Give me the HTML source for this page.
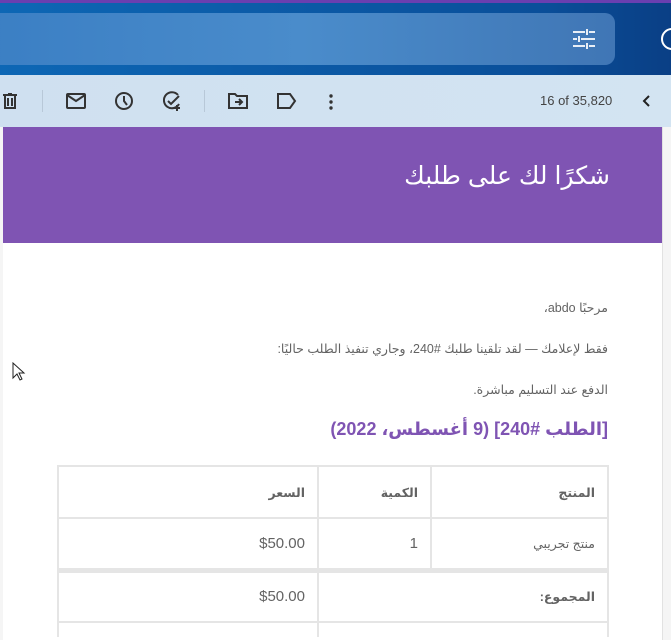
<!DOCTYPE html>
<html><head><meta charset="utf-8"><style>
*{margin:0;padding:0;box-sizing:border-box}
body{width:671px;height:640px;overflow:hidden;background:#f5f5f5;font-family:"Liberation Sans","DejaVu Sans",sans-serif;position:relative}
.top{position:absolute;left:0;top:0;width:671px;height:75px;background:linear-gradient(90deg,#0d67b5,#0a4f9a 80%,#0a3f85)}
.top:before{content:"";position:absolute;left:0;top:0;width:671px;height:3px;background:#6a3fb0}
.search{position:absolute;left:-10px;top:13px;width:625px;height:52px;border-radius:10px;background:linear-gradient(90deg,#3b7fc4,#4a8ccb 50%,#4076b5)}
.tb{position:absolute;left:0;top:75px;width:671px;height:52px;background:linear-gradient(90deg,#cfe0f0,#d3e4f2)}
.cnt{position:absolute;left:540px;top:93px;font-size:13px;color:#444}
.card{position:absolute;left:3px;top:127px;width:660px;height:513px;background:#fff;border-right:1px solid #e2e2e2;overflow:hidden}
.hdr{height:116px;background:#7f54b3;color:#fff;font-size:25px;text-align:right;padding:34px 52px 0 0;direction:rtl}
.p{position:absolute;right:54px;font-size:12.5px;color:#636363;direction:rtl}
.h2{position:absolute;right:54px;top:292px;font-size:18px;font-weight:bold;color:#7f54b3;direction:rtl}
table{position:absolute;left:54px;top:338px;width:552px;border-collapse:collapse;direction:rtl;font-size:12.5px;color:#636363}
td{border:2px solid #e5e5e5;height:52px;padding:0 12px;text-align:right}
</style></head><body>
<div class="top"><div class="search"></div>
<svg style="position:absolute;left:573px;top:29px" width="22" height="20" viewBox="0 0 22 20" fill="none" stroke="#e8eef6" stroke-width="2"><path d="M0 3h12M16 3h6M14 0v6M0 10h4M8 10h14M6 7v6M0 17h12M16 17h6M14 14v6"/></svg>
<svg style="position:absolute;left:660px;top:27px" width="11" height="24" viewBox="0 0 11 24" fill="none" stroke="#fff" stroke-width="2"><circle cx="12" cy="12" r="10"/></svg>
</div>
<div class="tb"></div>
<svg style="position:absolute;left:3px;top:93px" width="14" height="16" viewBox="0 0 14 16" fill="none" stroke="#333" stroke-width="2"><path d="M0 2h14M5 0h4M2 3v12h10V3M5 5v8M9 5v8"/></svg>
<div style="position:absolute;left:42px;top:90px;width:1px;height:22px;background:#b8c8d8"></div>
<div style="position:absolute;left:204px;top:90px;width:1px;height:22px;background:#b8c8d8"></div>
<svg style="position:absolute;left:66px;top:93px" width="20" height="16" viewBox="0 0 20 16" fill="none" stroke="#333" stroke-width="2"><rect x="1" y="1" width="18" height="14" rx="1"/><path d="M1 2l9 6 9-6"/></svg>
<svg style="position:absolute;left:114px;top:91px" width="20" height="20" viewBox="0 0 20 20" fill="none" stroke="#333" stroke-width="2"><circle cx="10" cy="10" r="8"/><path d="M10 5v5l3 4"/></svg>
<svg style="position:absolute;left:162px;top:91px" width="22" height="22" viewBox="0 0 22 22" fill="none" stroke="#333" stroke-width="2"><path d="M16 4a8 8 0 1 0 1 9"/><path d="M6 10l3 3 8-8M15 14v6M12 17h6"/></svg>
<svg style="position:absolute;left:228px;top:93px" width="20" height="16" viewBox="0 0 20 16" fill="none" stroke="#333" stroke-width="2"><path d="M1 1h6l2 2h10v12H1z"/><path d="M7 9h7M11 6l3 3-3 3"/></svg>
<svg style="position:absolute;left:277px;top:93px" width="20" height="16" viewBox="0 0 20 16" fill="none" stroke="#333" stroke-width="2"><path d="M1 1h12l5 7-5 7H1z"/></svg>
<svg style="position:absolute;left:328px;top:94px" width="6" height="16" viewBox="0 0 6 16" fill="#333"><circle cx="3" cy="2" r="1.7"/><circle cx="3" cy="8" r="1.7"/><circle cx="3" cy="14" r="1.7"/></svg>
<div class="cnt">16 of 35,820</div>
<svg style="position:absolute;left:642px;top:95px" width="10" height="12" viewBox="0 0 10 12" fill="none" stroke="#222" stroke-width="2"><path d="M7 1L2 6l5 5"/></svg>
<div class="card">
<div class="hdr">شكرًا لك على طلبك</div>
<div class="p" style="top:173px">مرحبًا abdo،</div>
<div class="p" style="top:214px">فقط لإعلامك — لقد تلقينا طلبك #240، وجاري تنفيذ الطلب حاليًا:</div>
<div class="p" style="top:255px">الدفع عند التسليم مباشرة.</div>
<div class="h2">[الطلب #240] (9 أغسطس، 2022)</div>
<table>
<tr><td style="width:177px;font-weight:bold">المنتج</td><td style="width:113px;font-weight:bold">الكمية</td><td style="font-weight:bold">السعر</td></tr>
<tr><td>منتج تجريبي</td><td style="font-size:15px">1</td><td style="font-size:15px">$50.00</td></tr>
<tr><td colspan="2" style="border-top:5px solid #e5e5e5;font-weight:bold">المجموع:</td><td style="border-top:5px solid #e5e5e5;font-size:15px">$50.00</td></tr>
<tr><td colspan="2" style="height:15px;border-bottom:0"></td><td style="height:15px;border-bottom:0"></td></tr>
</table>
</div>
<svg style="position:absolute;left:12px;top:362px" width="14" height="20" viewBox="0 0 14 20"><path d="M1 1v15l4-4 3 6 2-1-3-6h5z" fill="#fff" stroke="#222" stroke-width="1"/></svg>
</body></html>
